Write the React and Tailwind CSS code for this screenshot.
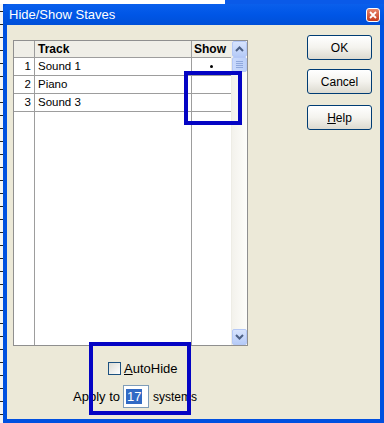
import React from 'react';

const rows = [
  { n: 1, name: 'Sound 1', show: true },
  { n: 2, name: 'Piano', show: false },
  { n: 3, name: 'Sound 3', show: false },
];

const Chevron = ({ down }) => (
  <svg width="9" height="6" viewBox="0 0 9 6" className={down ? '' : 'rotate-180'}>
    <path d="M1 1 L4.5 4.5 L8 1" stroke="#4d6185" strokeWidth="2" fill="none" />
  </svg>
);

const ScrollButton = ({ down }) => (
  <div className="h-[16px] w-[15px] rounded-[2px] border border-[#b4c8f6] bg-gradient-to-b from-[#d8e4fd] to-[#b6cbf7] flex items-center justify-center">
    <Chevron down={down} />
  </div>
);

const XpButton = ({ children, className = '' }) => (
  <button className={`h-[25px] w-[65px] rounded-[3px] border border-[#003c74] bg-gradient-to-b from-white via-[#f4f3ee] to-[#dcdad0] text-[12px] text-black ${className}`}>
    {children}
  </button>
);

export default function App() {
  return (
    <div className="relative w-[384px] h-[423px] overflow-hidden flex flex-col bg-white font-['Liberation_Sans',Arial,sans-serif]">
      {/* strip of whatever lies behind the dialog */}
      <div className="flex h-[4px]">
        <div className="w-[225px] bg-white" />
        <div className="flex-1 bg-[#0a5ae8]" />
      </div>

      <div className="flex flex-1">
        <div className="w-[3px] bg-[#f4f4f4] bg-[repeating-linear-gradient(to_bottom,transparent_0_7px,#222_7px_8px,transparent_8px_13px)]" />

        <div className="flex-1 flex flex-col bg-[#0050e0]">
          {/* title bar */}
          <div className="h-[21px] flex items-center justify-between pl-[6px] pr-[4px] bg-gradient-to-b from-[#0a5fec] via-[#0056e6] to-[#004fd8] rounded-tl-[6px]">
            <span className="text-[13px] text-white leading-none">Hide/Show Staves</span>
            <div className="w-[14px] h-[14px] rounded-[3px] border border-white bg-gradient-to-b from-[#e8846a] to-[#c33a1c] flex items-center justify-center">
              <svg width="8" height="8" viewBox="0 0 8 8">
                <path d="M1 1 L7 7 M7 1 L1 7" stroke="white" strokeWidth="1.8" />
              </svg>
            </div>
          </div>

          {/* dialog body */}
          <div className="flex-1 mx-[4px] mb-[4px] bg-[#ece9d8] flex">
            <div className="flex flex-col pl-[6px] pt-[15px]">
              {/* grid */}
              <div className="w-[235px] h-[306px] border border-[#8f8f8f] bg-white flex">
                <div className="flex flex-col flex-1">
                  <div className="flex h-[17px] bg-[#efeee7] border-b border-[#9d9d9d] text-[12px] font-bold">
                    <div className="w-[21px] border-r border-[#9d9d9d]" />
                    <div className="w-[157px] border-r border-[#9d9d9d] pl-[3px] leading-[16px]">Track</div>
                    <div className="w-[39px] pl-[2px] leading-[16px]">Show</div>
                  </div>
                  {rows.map((r) => (
                    <div key={r.n} className="flex h-[18px] border-b border-[#9d9d9d] text-[11.5px]">
                      <div className="w-[21px] border-r border-[#9d9d9d] text-right pr-[3px] leading-[17px]">{r.n}</div>
                      <div className="w-[157px] border-r border-[#9d9d9d] pl-[3px] leading-[17px]">{r.name}</div>
                      <div className="w-[39px] flex items-center justify-center">
                        {r.show && <div className="w-[3px] h-[3px] rounded-full bg-black" />}
                      </div>
                    </div>
                  ))}
                  <div className="flex flex-1">
                    <div className="w-[21px] border-r border-[#9d9d9d]" />
                    <div className="w-[157px] border-r border-[#9d9d9d]" />
                    <div className="w-[39px]" />
                  </div>
                </div>

                {/* scrollbar */}
                <div className="w-[16px] flex flex-col items-center bg-gradient-to-r from-[#f3f2ec] to-[#fdfdfa] border-l border-[#eeede6]">
                  <ScrollButton />
                  <div className="h-[15px] w-[15px] rounded-[2px] border border-[#b4c8f6] bg-gradient-to-r from-[#c9d9fc] to-[#bcd0f8] flex flex-col items-center justify-center gap-[1px]">
                    <div className="w-[7px] h-[1px] bg-[#8fa8dc]" />
                    <div className="w-[7px] h-[1px] bg-[#8fa8dc]" />
                    <div className="w-[7px] h-[1px] bg-[#8fa8dc]" />
                    <div className="w-[7px] h-[1px] bg-[#8fa8dc]" />
                  </div>
                  <div className="flex-1" />
                  <ScrollButton down />
                </div>
              </div>

              {/* bottom controls */}
              <div className="flex items-center pl-[95px] mt-[16px] h-[13px]">
                <div className="w-[13px] h-[13px] border border-[#1c5180] bg-gradient-to-br from-[#dcdcd5] to-white" />
                <span className="ml-[3px] text-[13px] leading-none">
                  <span className="underline">A</span>utoHide
                </span>
              </div>
              <div className="flex items-center pl-[60px] mt-[10px] h-[23px] text-[13px]">
                <span>Apply to</span>
                <div className="ml-[3px] w-[26px] h-[23px] border border-[#7f9db9] bg-white flex items-center pl-[2px]">
                  <span className="bg-[#316ac5] text-white leading-[15px] px-[1px]">17</span>
                </div>
                <span className="ml-[4px] text-[12px]">systems</span>
              </div>
            </div>

            {/* buttons */}
            <div className="flex flex-col ml-[59px] pt-[10px]">
              <XpButton>OK</XpButton>
              <XpButton className="mt-[9px]">Cancel</XpButton>
              <XpButton className="mt-[11px]">
                <span className="underline">H</span>elp
              </XpButton>
            </div>
          </div>
        </div>
      </div>

      {/* annotation rectangles drawn over the screenshot */}
      <div className="absolute left-[184px] top-[71px] w-[58px] h-[54px] border-[4px] border-[#0404c4]" />
      <div className="absolute left-[89px] top-[342px] w-[102px] h-[73px] border-[4px] border-[#0404c4]" />
    </div>
  );
}
